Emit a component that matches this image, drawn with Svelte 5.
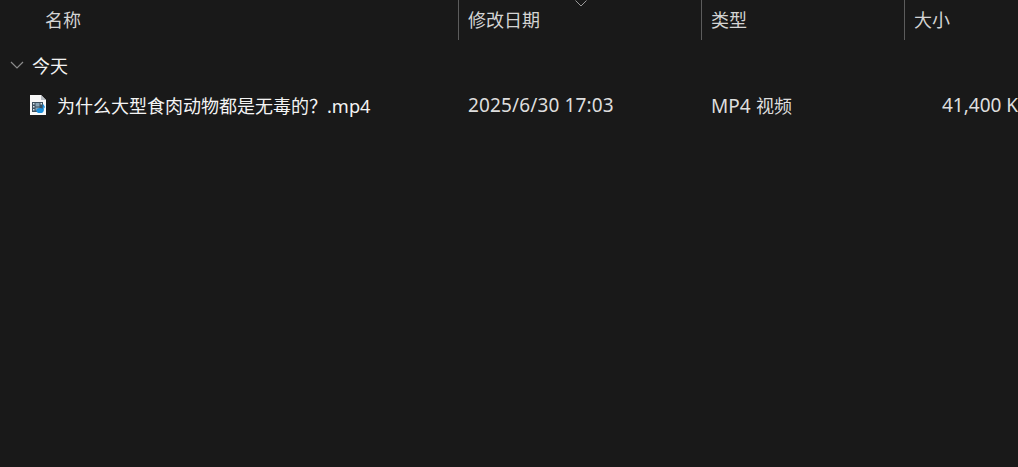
<script>
  const columns = [
    { label: '名称', cls: 'name' },
    { label: '修改日期', cls: 'date' },
    { label: '类型', cls: 'type' },
    { label: '大小', cls: 'size' }
  ];
</script>

<div class="explorer">
  <div class="header">
    {#each columns as col}
      <div class="head-cell {col.cls}">{col.label}</div>
    {/each}
    <svg class="sort" width="12" height="7" viewBox="0 0 12 7">
      <path d="M0.5 0.5 L6 6 L11.5 0.5" fill="none" stroke="#9a9a9a" stroke-width="1" />
    </svg>
  </div>

  <div class="group">
    <svg width="14" height="9" viewBox="0 0 14 9">
      <path d="M1 1 L7 7 L13 1" fill="none" stroke="#8c8c8c" stroke-width="1.2" />
    </svg>
    <span>今天</span>
  </div>

  <div class="row">
    <div class="cell name file">
      <svg class="file-icon" width="16" height="20" viewBox="0 0 16 20">
        <path d="M0 0 H11 L16 5 V20 H0 Z" fill="#f8f8f8" />
        <path d="M11 0 V5 H16 Z" fill="#b9bec4" />
        <rect x="2" y="7" width="11" height="10" fill="#3d4f5e" />
        <rect x="3" y="8" width="1.5" height="1.5" fill="#d5e2ea" />
        <rect x="3" y="11" width="1.5" height="1.5" fill="#d5e2ea" />
        <rect x="3" y="14" width="1.5" height="1.5" fill="#d5e2ea" />
        <rect x="5.5" y="8" width="4" height="3.5" fill="#8aa3b4" />
        <rect x="5.5" y="12.5" width="4" height="3" fill="#8aa3b4" />
        <rect x="10.5" y="8" width="1.5" height="1.5" fill="#d5e2ea" />
        <ellipse cx="10" cy="15.5" rx="3.6" ry="2.6" fill="#1a8fdc" />
        <path d="M12.6 15.5 V9.5 H13.8 C14 11 15.4 11.4 15 13.4 C14.6 12.6 14.2 12.3 13.8 12.2 V15.5 Z" fill="#1a8fdc" />
      </svg>
      <span>为什么大型食肉动物都是无毒的？<span class="latin ext">.mp4</span></span>
    </div>
    <div class="cell date"><span class="latin stamp">2025/6/30 17:03</span></div>
    <div class="cell type"><span><span class="latin">MP4</span><span class="unit">视频</span></span></div>
    <div class="cell size"><span class="latin">41,400 KB</span></div>
  </div>
</div>

<style>
  :global(body) {
    background: #191919;
  }

  .explorer {
    position: relative;
    width: 1018px;
    height: 467px;
    overflow: hidden;
    background: #191919;
    color: #dedede;
    font-family: "Noto Sans CJK SC", "Noto Sans", sans-serif;
    font-size: 18px;
    line-height: 24px;
  }

  .latin {
    font-family: "Noto Sans", "Open Sans", sans-serif;
    font-size: 19px;
  }

  .ext {
    font-size: 18.2px;
  }

  .stamp {
    letter-spacing: 0.14px;
  }

  .unit {
    margin-left: 5.5px;
  }

  .header,
  .row {
    display: grid;
    grid-template-columns: 458px 243px 203px 1fr;
  }

  .header {
    height: 40px;
  }

  .head-cell {
    display: flex;
    align-items: center;
    border-left: 1px solid #5c5c5c;
    padding-left: 9px;
    padding-bottom: 2px;
    color: #d4d4d4;
  }

  .head-cell.name {
    border-left: none;
    padding-left: 45px;
  }

  .sort {
    position: absolute;
    top: 0;
    left: 575px;
  }

  .group {
    display: flex;
    align-items: center;
    gap: 8px;
    height: 40px;
    margin-top: 5px;
    padding-left: 10px;
    color: #f2f2f2;
  }

  .row {
    height: 40px;
    white-space: nowrap;
  }

  .cell {
    display: flex;
    align-items: center;
    padding-left: 10px;
    overflow: hidden;
  }

  .cell.file {
    padding-left: 30px;
    gap: 11px;
    color: #f4f4f4;
  }

  .cell.size {
    padding-left: 38px;
  }
</style>
